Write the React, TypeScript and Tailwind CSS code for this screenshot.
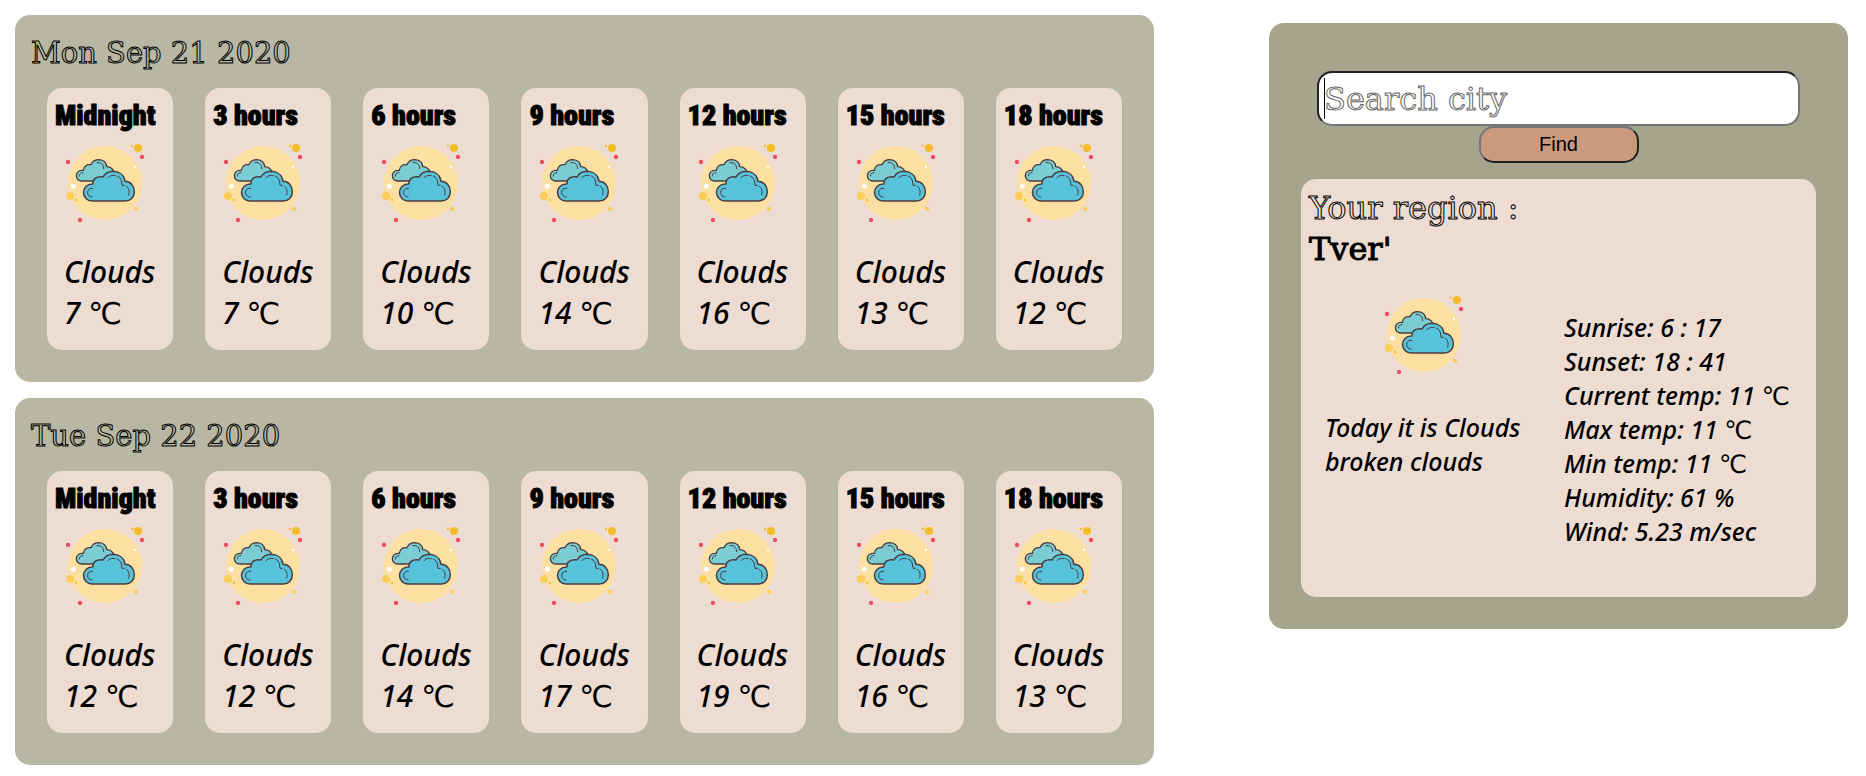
const HOURS = ["Midnight", "3 hours", "6 hours", "9 hours", "12 hours", "15 hours", "18 hours"];

const DAYS = [
  { date: "Mon Sep 21 2020", temps: [7, 7, 10, 14, 16, 13, 12] },
  { date: "Tue Sep 22 2020", temps: [12, 12, 14, 17, 19, 16, 13] },
];

const DETAILS = [
  "Sunrise: 6 : 17",
  "Sunset: 18 : 41",
  "Current temp: 11 ℃",
  "Max temp: 11 ℃",
  "Min temp: 11 ℃",
  "Humidity: 61 %",
  "Wind: 5.23 m/sec",
];

function CloudIcon() {
  return (
    <svg viewBox="0 0 270 285" className="h-[95px] w-[90px]" role="img" aria-label="Clouds">
      <circle cx="135" cy="144" r="111" fill="#fce0a2" />
      <circle cx="24" cy="81" r="6.5" fill="#ee4b5d" />
      <circle cx="246" cy="66" r="6.5" fill="#ee4b5d" />
      <circle cx="60" cy="255" r="6.5" fill="#ee4b5d" />
      <circle cx="234" cy="39" r="12" fill="#f3bd27" />
      <circle cx="216" cy="33" r="3.5" fill="#f3bd27" />
      <circle cx="30" cy="183" r="12" fill="#fbcd59" />
      <circle cx="48" cy="195" r="3.5" fill="#f3bd27" />
      <circle cx="228" cy="222" r="6.5" fill="#fbcd59" />
      <circle cx="40" cy="154" r="7.5" fill="#fff" />
      <circle cx="225" cy="96" r="3.5" fill="#fff" />
      <g stroke="#4c3b3e" strokeLinecap="round" strokeLinejoin="round">
        <path
          d="M65 138 A15.500 15.500 0 0 1 65 106 L70 106 C71 94 81 87 93 89 C98 77 107 74 117 74 C130 75 139 83 140 95 C148 95 155 99 160 106 L145 138 Z"
          fill="#79cdd3"
          strokeWidth="4"
        />
        <path d="M58 123 C58 116 63 112 69 113 M111 83 C121 81 129 87 130 95 L131 101" fill="none" strokeWidth="3" />
        <path
          d="M96 198 A25 25 0 0 1 96 147 L99 146 C98 132 110 123 129 126 C136 113 149 109 161 109 C179 110 193 121 195 139 C211 139 223 152 223 170 C223 187 211 198 196 198 Z"
          fill="#57c3da"
          strokeWidth="4.500"
        />
        <path
          d="M98 160 C88 159 83 164 83 173 C83 181 89 186 96 186 M144 128 C150 121 158 120 166 122 M172 123 C181 127 185 135 185 144 L186 151 L193 151 M199 154 C207 159 209 168 206 180"
          fill="none"
          strokeWidth="3"
        />
      </g>
    </svg>
  );
}

function Celsius() {
  return <span className="font-['DejaVu_Sans',sans-serif] leading-none font-normal not-italic">℃</span>;
}

function HourCard({ label, temp }: { label: string; temp: number }) {
  return (
    <article className="rounded-[15px] bg-[#eddcd2] pt-2 pb-[17px]">
      <h3 className="pl-2 font-['Roboto_Condensed','Roboto',sans-serif] text-[28px] leading-[39px] font-black whitespace-nowrap [-webkit-text-stroke:1px_#000]">
        {label}
      </h3>
      <div className="pl-[13px]">
        <CloudIcon />
      </div>
      <p className="mt-[21px] pl-[17px] text-[30px] leading-[41px] font-medium whitespace-nowrap italic">
        Clouds
        <br />
        {temp} <Celsius />
      </p>
    </article>
  );
}

export default function App() {
  return (
    <div className="grid grid-cols-[1139fr_579fr] items-start gap-x-[115px] bg-white pr-[18px] pl-[15px] font-['Noto_Sans','Noto_Sans_CJK_SC',sans-serif] text-black">
      <main className="flex flex-col gap-4 py-[15px]">
        {DAYS.map((day) => (
          <section key={day.date} className="rounded-[15px] bg-[#b7b7a4] pt-[18px] pb-8">
            <h2 className="pl-4 font-['DejaVu_Serif',serif] text-[29px] leading-[41px] text-[#b7b7a4] [-webkit-text-stroke:1px_#000]">
              {day.date}
            </h2>
            <div className="mt-[14px] grid grid-cols-7 gap-8 px-8">
              {HOURS.map((hour, i) => (
                <HourCard key={hour} label={hour} temp={day.temps[i]} />
              ))}
            </div>
          </section>
        ))}
      </main>

      <aside className="mt-[23px] rounded-[15px] bg-[#a5a58d] px-8 pt-12 pb-8">
        <form className="flex flex-col items-center px-4" onSubmit={(e) => e.preventDefault()}>
          <div className="relative w-full">
            <input
              type="text"
              aria-label="Search city"
              placeholder="Search city"
              className="block h-[55px] w-full rounded-[15px] border-2 border-t-[#212121] border-r-[#767676] border-b-[#767676] border-l-[#212121] bg-white px-[5px] font-['DejaVu_Serif',serif] text-[32px] outline-none placeholder:text-white placeholder:[-webkit-text-stroke:1px_#666]"
            />
            <span className="pointer-events-none absolute top-[7px] left-[7px] h-[41px] w-px bg-black" />
          </div>
          <button
            type="submit"
            className="h-[37px] w-40 rounded-[15px] border-2 border-t-[#767676] border-r-[#212121] border-b-[#212121] border-l-[#767676] bg-[#cb997e] pb-[2px] font-['Liberation_Sans',sans-serif] text-[20px]"
          >
            Find
          </button>
        </form>

        <section className="mt-4 rounded-[15px] bg-[#eddcd2] pt-[9px] pb-[49px]">
          <div className="pl-2 font-['DejaVu_Serif',serif] text-[32px] leading-[41px]">
            <p className="text-[#eddcd2] [-webkit-text-stroke:1px_#000]">Your region :</p>
            <h2 className="[-webkit-text-stroke:1px_#000]">Tver'</h2>
          </div>
          <div className="flex justify-between px-6 text-[25px] leading-[34px] font-medium whitespace-nowrap italic">
            <div className="mt-[17px]">
              <div className="pl-[54px]">
                <CloudIcon />
              </div>
              <p className="mt-7">
                Today it is Clouds
                <br />
                broken clouds
              </p>
            </div>
            <ul className="mt-10 w-[228px]">
              {DETAILS.map((line) => (
                <li key={line}>
                  {line.replace("℃", "")}
                  {line.endsWith("℃") && <Celsius />}
                </li>
              ))}
            </ul>
          </div>
        </section>
      </aside>
    </div>
  );
}
